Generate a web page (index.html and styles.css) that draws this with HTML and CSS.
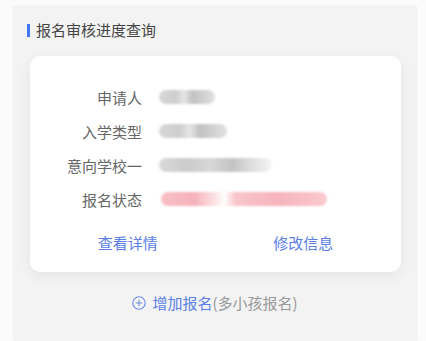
FILE: index.html
```html
<!DOCTYPE html>
<html lang="zh">
<head>
<meta charset="utf-8">
<link rel="stylesheet" href="styles.css">
</head>
<body>
<div class="panel">
  <div class="title"><span class="bar"></span>报名审核进度查询</div>
  <div class="card">
    <div class="rows">
      <div class="label">申请人</div>
      <div class="value"><span class="blob gray w1"></span></div>
      <div class="label">入学类型</div>
      <div class="value"><span class="blob gray w2"></span></div>
      <div class="label">意向学校一</div>
      <div class="value"><span class="blob gray w3"></span></div>
      <div class="label">报名状态</div>
      <div class="value"><span class="blob pink w4"></span></div>
    </div>
    <div class="links">
      <a class="link">查看详情</a>
      <a class="link">修改信息</a>
    </div>
  </div>
  <div class="add">
    <svg class="plus" width="14" height="14" viewBox="0 0 14 14"><circle cx="7" cy="7" r="6.2" fill="none" stroke="#6f8ee6" stroke-width="1.1"/><path d="M7 3.8v6.4M3.8 7h6.4" stroke="#6f8ee6" stroke-width="1.1"/></svg>
    <span class="add-main">增加报名</span><span class="add-sub">(多小孩报名)</span>
  </div>
</div>
</body>
</html>
```
FILE: styles.css
```css
html, body { margin: 0; padding: 0; }
body {
  background: #fbfbfb;
  font-family: "Noto Sans CJK SC", "Noto Sans", sans-serif;
  padding: 6px 9px 0 13px;
  height: 341px;
  box-sizing: border-box;
  overflow: hidden;
}
.panel {
  background: #f3f3f3;
  height: 335px;
  display: flex;
  flex-direction: column;
  box-shadow: 0 0 2px rgba(0,0,0,0.04);
}
.title {
  display: flex;
  align-items: center;
  padding: 14px 0 0 14px;
  height: 20px;
  font-size: 15px;
  color: #444;
  line-height: 20px;
}
.bar {
  width: 3px;
  height: 13px;
  background: #3f78f2;
  margin-right: 6px;
}
.card {
  margin: 16px 16px 0 17px;
  background: #fff;
  border-radius: 10px;
  box-shadow: 0 4px 14px rgba(0,0,0,0.06);
  padding: 24px 10px 0 0;
  height: 216px;
  box-sizing: border-box;
  display: flex;
  flex-direction: column;
}
.rows {
  display: grid;
  grid-template-columns: 112px 1fr;
  column-gap: 17px;
  grid-auto-rows: 34px;
  align-items: center;
}
.label {
  text-align: right;
  font-size: 15px;
  color: #666;
}
.value { display: flex; align-items: center; }
.blob {
  display: block;
  height: 14px;
  border-radius: 7px;
  filter: blur(0.8px);
}
.gray { background: linear-gradient(90deg, #d8d8d8 0%, #cdcdcd 30%, #e6e6e6 45%, #c2c2c2 60%, #d2d2d2 80%, #e2e2e2 100%); }
.w1 { width: 56px; }
.w2 { width: 68px; }
.w3 { width: 113px; background: linear-gradient(90deg, #dadada 0%, #cbcbcb 25%, #d8d8d8 45%, #c4c4c4 65%, #dbdbdb 80%, #f5f5f5 100%); }
.pink { background: linear-gradient(90deg, #f8c0c6 0%, #f5b2b9 20%, #fde4e6 33%, #fff 38%, #f9c6cb 45%, #f6b4bb 70%, #fac9ce 100%); }
.w4 { width: 166px; margin-left: 2px; }
.links {
  display: grid;
  grid-template-columns: 1fr 1fr;
  margin-top: 10px;
  padding-left: 10px;
}
.link {
  text-align: center;
  font-size: 15px;
  color: #5a7ee6;
  line-height: 34px;
}
.add {
  display: flex;
  align-items: center;
  justify-content: center;
  margin-top: 21px;
  font-size: 15px;
  line-height: 20px;
}
.plus { margin-right: 6px; }
.add-main { color: #5a7ee6; }
.add-sub { color: #999; }
```
